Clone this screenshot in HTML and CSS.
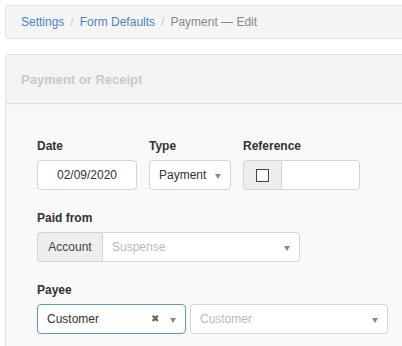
FILE: index.html
```html
<!DOCTYPE html>
<html>
<head>
<meta charset="utf-8">
<link rel="stylesheet" href="styles.css">
</head>
<body>
<div class="crumbs">
  <a class="link">Settings</a><span class="sep">/</span><a class="link">Form Defaults</a><span class="sep">/</span><span class="active">Payment — Edit</span>
</div>
<div class="panel">
  <div class="panel-head">Payment or Receipt</div>
  <div class="panel-body">
    <div class="row">
      <div class="field">
        <div class="label">Date</div>
        <div class="ctl date">02/09/2020</div>
      </div>
      <div class="field">
        <div class="label">Type</div>
        <div class="ctl type">Payment<span class="caret"></span></div>
      </div>
      <div class="field">
        <div class="label">Reference</div>
        <div class="group ref">
          <div class="addon check"><span class="box"></span></div>
          <div class="ctl refin"></div>
        </div>
      </div>
    </div>
    <div class="row">
      <div class="field">
        <div class="label">Paid from</div>
        <div class="group paid">
          <div class="addon acct">Account</div>
          <div class="ctl sel placeholder">Suspense<span class="caret"></span></div>
        </div>
      </div>
    </div>
    <div class="row">
      <div class="field">
        <div class="label">Payee</div>
        <div class="payee">
          <div class="ctl sel focus">Customer<span class="clear">✖</span><span class="caret"></span></div>
          <div class="ctl sel placeholder wide">Customer<span class="caret"></span></div>
        </div>
      </div>
    </div>
  </div>
</div>
</body>
</html>
```
FILE: styles.css
```css
html, body { margin: 0; padding: 0; background: #fff; }
body { font-family: "Liberation Sans", Arial, sans-serif; font-size: 12px; color: #333; width: 402px; height: 346px; overflow: hidden; }

.crumbs {
  margin: 5px 0 0 5px;
  width: 397px;
  box-sizing: border-box;
  height: 34px;
  padding: 0 15px;
  display: flex;
  align-items: center;
  background: #f5f5f5;
  border: 1px solid #e3e3e3;
  border-right: none;
  border-radius: 4px 0 0 4px;
  font-size: 12px;
}
.link { color: #4a83c0; }
.sep { color: #ccc; padding: 0 6px; }
.active { color: #888; }

.panel {
  margin: 15px 0 0 5px;
  width: 397px;
  box-sizing: border-box;
  border: 1px solid #e2e2e2;
  border-right: none;
  border-bottom: none;
  border-radius: 4px 0 0 0;
  background: #f9f9f9;
  height: 292px;
}
.panel-head {
  height: 49px;
  box-sizing: border-box;
  padding: 1px 15px 0;
  display: flex;
  align-items: center;
  background: #f3f3f3;
  border-bottom: 1px solid #dedede;
  color: #c9c9c9;
  font-weight: bold;
  font-size: 13px;
}
.panel-body {
  padding: 33px 31px 0;
  background: linear-gradient(#f5f5f5, #f9f9f9 12px);
}
.row { display: flex; gap: 12px; margin-bottom: 19px; }
.label { font-weight: bold; font-size: 12px; line-height: 18px; margin-bottom: 5px; color: #333; }

.ctl {
  height: 30px;
  box-sizing: border-box;
  border: 1px solid #d4d4d4;
  border-radius: 4px;
  background: #fff;
  display: flex;
  align-items: center;
  position: relative;
  font-size: 12px;
  color: #333;
}
.date { width: 100px; justify-content: center; }
.type { width: 82px; padding-left: 9px; }
.caret {
  position: absolute;
  right: 9px;
  top: 13px;
  width: 0; height: 0;
  border-left: 3px solid transparent;
  border-right: 3px solid transparent;
  border-top: 5px solid #888;
}
.group { display: flex; }
.addon {
  height: 30px;
  box-sizing: border-box;
  background: #eee;
  border: 1px solid #d4d4d4;
  border-right: none;
  border-radius: 4px 0 0 4px;
  display: flex;
  align-items: center;
  justify-content: center;
}
.check { width: 38px; }
.box { width: 11px; height: 11px; border: 1px solid #444; background: #fff; }
.refin { width: 79px; border-radius: 0 4px 4px 0; }
.acct { width: 65px; color: #444; }
.paid .sel { width: 198px; border-radius: 0 4px 4px 0; }
.sel { padding-left: 9px; }
.placeholder { color: #bbb; }
.payee { display: flex; gap: 4px; }
.focus { width: 149px; border-color: #5f96d4; }
.wide { width: 198px; }
.clear { position: absolute; right: 26px; top: 8px; font-size: 10px; color: #666; }
```
